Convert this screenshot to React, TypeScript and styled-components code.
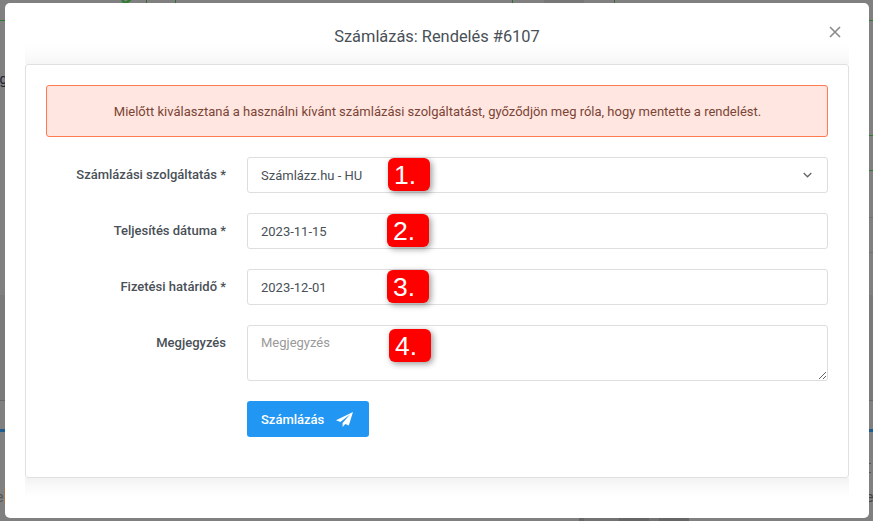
import React from "react";
import styled, { createGlobalStyle } from "styled-components";

const Global = createGlobalStyle`
  html, body { margin: 0; padding: 0; height: 100%; overflow: hidden; }
  #root { height: 100%; }
  * { box-sizing: border-box; }
  body { font-family: Roboto, "Liberation Sans", sans-serif; }
`;

const Page = styled.div`
  position: relative;
  width: 873px;
  height: 521px;
  padding: 3px 4px 3px 5px;
  background: #808080;
  overflow: hidden;
`;

const Backdrop = styled.div`
  position: absolute;
  inset: 0;
`;

const Patch = styled.div<{ $x: number; $y: number; $w: number; $h: number; $c: string }>`
  position: absolute;
  left: ${(p) => p.$x}px;
  top: ${(p) => p.$y}px;
  width: ${(p) => p.$w}px;
  height: ${(p) => p.$h}px;
  background: ${(p) => p.$c};
`;

const PeekText = styled.span<{ $x: number; $y: number; $c?: string }>`
  position: absolute;
  left: ${(p) => p.$x}px;
  top: ${(p) => p.$y}px;
  font-size: 14px;
  line-height: 16px;
  white-space: nowrap;
  color: ${(p) => p.$c || "#1c2433"};
`;

const PeekCheck = styled.svg`
  position: absolute;
  left: 121px;
  top: 0;
  width: 15px;
  height: 3px;
`;

const Modal = styled.div`
  position: relative;
  width: 864px;
  height: 515px;
  background: #fff;
  border-radius: 5px;
  display: flex;
  flex-direction: column;
`;

const Header = styled.div`
  position: relative;
  height: 41px;
  flex: none;
  display: flex;
  align-items: flex-start;
  justify-content: center;
  padding-top: 24px;
`;

const Title = styled.h2`
  margin: 0;
  font-size: 16.4px;
  font-weight: 400;
  color: #495057;
  line-height: 20px;
`;

const Close = styled.button`
  position: absolute;
  top: 22px;
  right: 27px;
  width: 14px;
  height: 14px;
  padding: 0;
  border: 0;
  background: none;
  display: flex;
  color: #8a8a8a;
`;

const CardShell = styled.div`
  margin: 0 20px;
  padding: 20px 0;
  background:
    linear-gradient(to top, #f6f6f6, #fbfbfb 45%, #ffffff) top / 100% 20px no-repeat,
    linear-gradient(to bottom, #f2f2f2, #fafafa 45%, #ffffff) bottom / 100% 20px no-repeat;
`;

const Card = styled.div`
  height: 414px;
  padding: 20px;
  background: #fff;
  border: 1px solid #e0e0e0;
  border-radius: 3px;
  display: flex;
  flex-direction: column;
  gap: 20px;
`;

const Alert = styled.div`
  height: 52px;
  display: flex;
  align-items: center;
  justify-content: center;
  background: #ffe6e0;
  border: 1px solid #ff7a50;
  border-radius: 3px;
  color: #7b4436;
  font-size: 13px;
  padding-left: 1px;
`;

const Row = styled.div`
  position: relative;
  display: grid;
  grid-template-columns: 180px 581px;
  column-gap: 21px;
  align-items: start;
`;

const Label = styled.label`
  text-align: right;
  font-size: 13px;
  font-weight: 500;
  color: #495057;
  line-height: 20px;
  padding-top: 8px;
`;

const fieldCss = `
  display: block;
  width: 100%;
  background: #fff;
  border: 1px solid #dedede;
  border-radius: 3px;
  color: #495057;
  font-family: Roboto, "Liberation Sans", sans-serif;
  font-size: 13px;
  outline: none;
  padding: 0 13px;
`;

const SelectWrap = styled.div`
  position: relative;
`;

const Select = styled.select`
  ${fieldCss}
  height: 36px;
  appearance: none;
`;

const Chevron = styled.svg`
  position: absolute;
  right: 16px;
  top: 15px;
  width: 9px;
  height: 6px;
  pointer-events: none;
`;

const Input = styled.input`
  ${fieldCss}
  height: 36px;
`;

const Textarea = styled.textarea`
  ${fieldCss}
  height: 56px;
  padding-top: 8px;
  line-height: 18px;
  &::placeholder { color: #9a9a9a; opacity: 1; }
`;

const Actions = styled.div`
  padding-left: 201px;
`;

const Submit = styled.button`
  width: 122px;
  height: 36px;
  background: #2196f3;
  border: 0;
  border-radius: 3px;
  color: #fff;
  font-family: Roboto, "Liberation Sans", sans-serif;
  font-size: 13px;
  font-weight: 500;
  display: flex;
  align-items: center;
  gap: 12px;
  padding: 0 0 0 14px;
`;

const Badge = styled.div<{ $left: number; $top: number }>`
  position: absolute;
  left: ${(p) => p.$left}px;
  top: ${(p) => p.$top}px;
  width: 42px;
  height: 33px;
  background: #ff0000;
  border-radius: 6px;
  box-shadow: 2px 2px 6px rgba(0, 0, 0, 0.4);
  color: #fff;
  font-family: "Liberation Sans", Arial, sans-serif;
  font-size: 26.5px;
  line-height: 35px;
  padding-left: 6px;
`;

const fragments: [number, number, number, number, string][] = [
  [0, 20, 5, 1, "#2f7a2f"],
  [146, 0, 1, 3, "#2f6f2f"],
  [175, 0, 1, 3, "#2f6f2f"],
  [512, 0, 1, 3, "#2f6f2f"],
  [614, 0, 1, 3, "#2f6f2f"],
  [544, 0, 40, 3, "#777777"],
  [869, 20, 4, 1, "#2f7a2f"],
  [869, 135, 4, 1, "#2f7a2f"],
  [869, 170, 4, 1, "#2f7a2f"],
  [869, 217, 4, 1, "#717171"],
  [869, 252, 4, 1, "#717171"],
  [0, 295, 5, 105, "#7a7a7a"],
  [869, 295, 4, 105, "#7a7a7a"],
  [0, 400, 5, 1, "#686868"],
  [869, 400, 4, 1, "#686868"],
  [0, 429, 5, 3, "#1f5c8f"],
  [869, 429, 4, 3, "#1f5c8f"],
  [869, 463, 2, 1, "#555"],
  [869, 472, 2, 1, "#555"],
  [4, 489, 1, 15, "#a8764e"],
  [579, 518, 5, 3, "#666"],
  [584, 518, 35, 3, "#727272"],
  [619, 518, 30, 3, "#666"],
  [649, 518, 10, 3, "#727272"],
  [659, 518, 30, 3, "#666"],
];

export default function App() {
  return (
    <>
      <Global />
      <Page>
        <Backdrop>
          {fragments.map(([x, y, w, h, c], i) => (
            <Patch key={i} $x={x} $y={y} $w={w} $h={h} $c={c} />
          ))}
          <PeekCheck viewBox="0 0 15 3" fill="none" stroke="#2e7d32" strokeWidth="2.4">
            <path d="M1 0l3.5 3.5L10-1" />
          </PeekCheck>
          <PeekText $x={191} $y={-13}>Dandaandana</PeekText>
          <PeekText $x={633} $y={-13}>John Doe</PeekText>
          <PeekText $x={-8} $y={71}>aga</PeekText>
          <PeekText $x={-4} $y={489} $c="#555">e</PeekText>
          <PeekText $x={866} $y={489} $c="#444">e</PeekText>
        </Backdrop>
        <Modal>
          <Header>
            <Title>Számlázás: Rendelés #6107</Title>
            <Close aria-label="Bezárás">
              <svg width="14" height="14" viewBox="0 0 14 14" fill="none" stroke="currentColor" strokeWidth="1.6">
                <path d="M2 2l10 10M12 2L2 12" />
              </svg>
            </Close>
          </Header>
          <CardShell>
            <Card>
              <Alert>
                Mielőtt kiválasztaná a használni kívánt számlázási szolgáltatást, győződjön meg róla, hogy mentette a rendelést.
              </Alert>
              <Row>
                <Label>Számlázási szolgáltatás *</Label>
                <SelectWrap>
                  <Select defaultValue="hu">
                    <option value="hu">Számlázz.hu - HU</option>
                  </Select>
                  <Chevron viewBox="0 0 9 6" fill="none" stroke="#666" strokeWidth="1.3">
                    <path d="M.7 1l3.8 3.8L8.3 1" />
                  </Chevron>
                </SelectWrap>
                <Badge $left={342} $top={1}>1.</Badge>
              </Row>
              <Row>
                <Label>Teljesítés dátuma *</Label>
                <Input readOnly value="2023-11-15" />
                <Badge $left={341} $top={1}>2.</Badge>
              </Row>
              <Row>
                <Label>Fizetési határidő *</Label>
                <Input readOnly value="2023-12-01" />
                <Badge $left={341} $top={1}>3.</Badge>
              </Row>
              <Row>
                <Label>Megjegyzés</Label>
                <Textarea placeholder="Megjegyzés" />
                <Badge $left={343} $top={4}>4.</Badge>
              </Row>
              <Actions>
                <Submit>
                  Számlázás
                  <svg width="17" height="15" viewBox="0 0 17 15" fill="#fff">
                    <path d="M17 0L0 8.3l4.4 1.6L14 2.6 6.6 11v4l2.7-2.9 3.5 1.3z" />
                  </svg>
                </Submit>
              </Actions>
            </Card>
          </CardShell>
        </Modal>
      </Page>
    </>
  );
}
